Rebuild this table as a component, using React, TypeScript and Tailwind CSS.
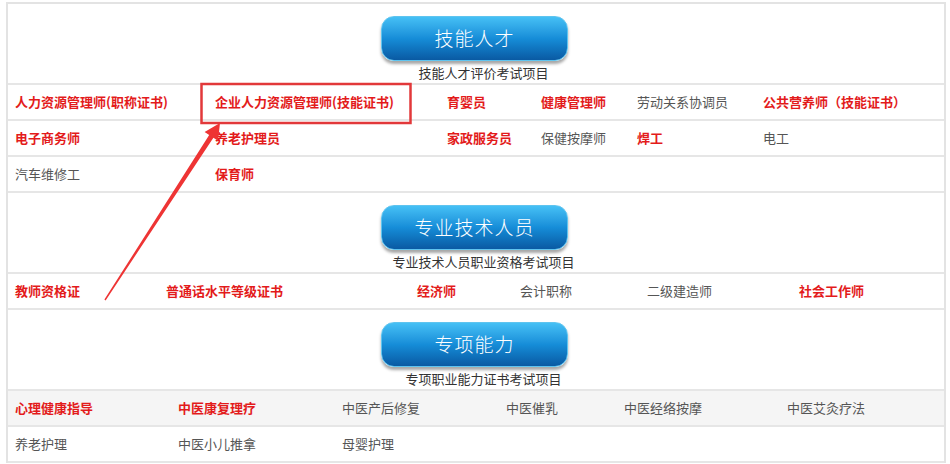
import React from 'react';

type Item = { t: string; red?: boolean };

const sections: { title: string; sub: string; cols: string; rows: Item[][]; shade?: boolean }[] = [
  {
    title: '技能人才',
    sub: '技能人才评价考试项目',
    cols: 'grid-cols-[200px_232px_94px_96px_126px_1fr]',
    rows: [
      [
        { t: '人力资源管理师(职称证书)', red: true },
        { t: '企业人力资源管理师(技能证书)', red: true },
        { t: '育婴员', red: true },
        { t: '健康管理师', red: true },
        { t: '劳动关系协调员' },
        { t: '公共营养师（技能证书）', red: true },
      ],
      [
        { t: '电子商务师', red: true },
        { t: '养老护理员', red: true },
        { t: '家政服务员', red: true },
        { t: '保健按摩师' },
        { t: '焊工', red: true },
        { t: '电工' },
      ],
      [{ t: '汽车维修工' }, { t: '保育师', red: true }],
    ],
  },
  {
    title: '专业技术人员',
    sub: '专业技术人员职业资格考试项目',
    cols: 'grid-cols-[151px_251px_103px_127px_152px_1fr]',
    rows: [
      [
        { t: '教师资格证', red: true },
        { t: '普通话水平等级证书', red: true },
        { t: '经济师', red: true },
        { t: '会计职称' },
        { t: '二级建造师' },
        { t: '社会工作师', red: true },
      ],
    ],
  },
  {
    title: '专项能力',
    sub: '专项职业能力证书考试项目',
    cols: 'grid-cols-[163px_164px_164px_118px_163px_1fr]',
    shade: true,
    rows: [
      [
        { t: '心理健康指导', red: true },
        { t: '中医康复理疗', red: true },
        { t: '中医产后修复' },
        { t: '中医催乳' },
        { t: '中医经络按摩' },
        { t: '中医艾灸疗法' },
      ],
      [{ t: '养老护理' }, { t: '中医小儿推拿' }, { t: '母婴护理' }],
    ],
  },
];

const Section = ({ s }: { s: (typeof sections)[number] }) => (
  <div>
    <div className="flex flex-col items-center pt-[12px] border-b-2 border-[#e6e6e6]">
      <div className="w-[187px] h-[45px] ml-[-3px] rounded-[13px] bg-gradient-to-b from-[#45c0f5] via-[#168dd8] to-[#0a5aa3] shadow-[0_3px_3px_rgba(0,0,0,0.35)] border border-[#5fc4ef] flex items-center justify-center text-white text-[19px] font-light tracking-[1px]">
        {s.title}
      </div>
      <div className="h-[21px] leading-[21px] text-[13px] text-[#333] ml-[15px] mt-[1px]">{s.sub}</div>
    </div>
    {s.rows.map((row, i) => (
      <div
        key={i}
        className={`grid ${s.cols} h-[36px] items-center pl-[7px] border-b-2 border-[#e6e6e6] text-[13px] ${
          s.shade && i === 0 ? 'bg-[#f5f5f5]' : ''
        }`}
      >
        {row.map((c, j) => (
          <div key={j} className={c.red ? 'text-[#e31b1b] font-bold' : 'text-[#555]'}>
            {c.t}
          </div>
        ))}
      </div>
    ))}
  </div>
);

export default function App() {
  return (
    <div className="relative w-[950px] h-[464px] bg-white overflow-hidden font-['Noto_Sans_CJK_SC',sans-serif]">
      <div className="ml-[6px] mt-[2px] w-[940px] border-2 border-b-0 border-[#e3e3e3]">
        {sections.map((s, i) => (
          <Section key={i} s={s} />
        ))}
      </div>
      <svg className="absolute left-0 top-0 pointer-events-none" width="950" height="464">
        <rect x="201.5" y="84" width="209" height="39" fill="none" stroke="#e2383a" strokeWidth="2.5" />
        <polygon
          points="104.4,299.6 209.2,135 204.6,132 220,123 218,140.8 213.4,137.8 105.6,300.4"
          fill="#ee3434"
        />
      </svg>
    </div>
  );
}
